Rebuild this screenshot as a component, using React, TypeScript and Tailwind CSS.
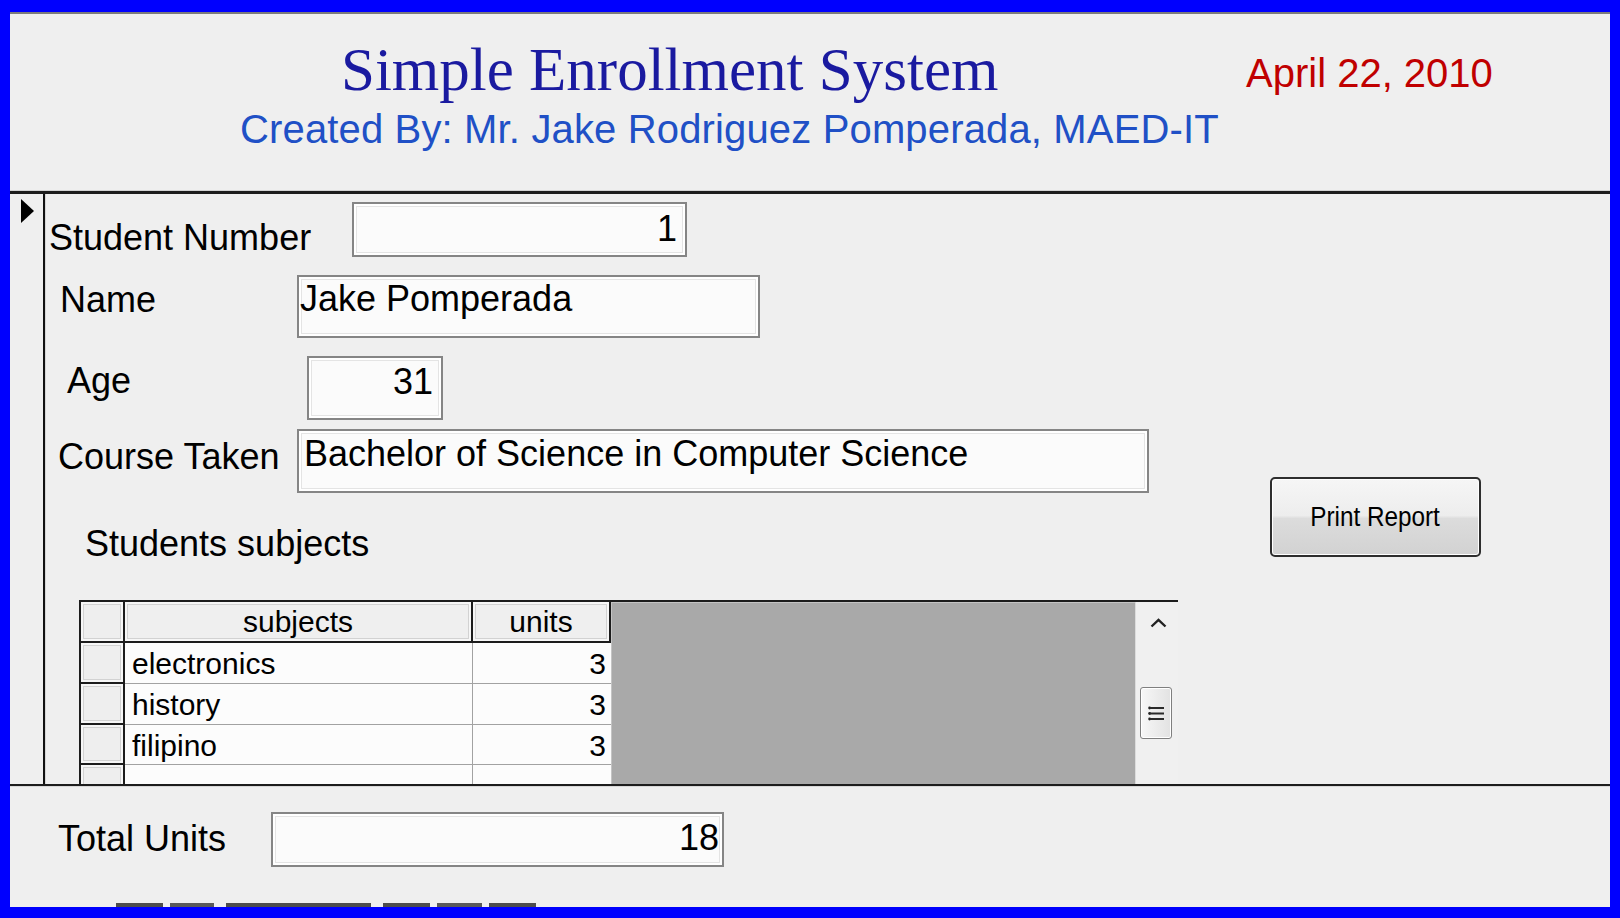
import React from 'react';

const labelCls = "text-[36px] leading-none text-black whitespace-nowrap";

interface BoxProps {
  value: string;
  className: string;
}

// access-style text box, sizes passed in full
const TextBox: React.FC<BoxProps> = ({ value, className }) => (
  <div
    className={`shrink-0 border-2 border-[#858585] bg-[#fbfbfb] text-[36px] leading-none text-black whitespace-nowrap overflow-hidden shadow-[inset_0_0_0_2px_#ffffff,inset_0_0_0_3px_#e4e4e4] ${className}`}
  >
    {value}
  </div>
);

const subjects = [
  { name: 'electronics', units: '3', h: 'h-[41px]' },
  { name: 'history', units: '3', h: 'h-[41px]' },
  { name: 'filipino', units: '3', h: 'h-[40px]' },
  { name: '', units: '', h: 'h-[40px]' },
];

const cellFrame = "shadow-[inset_0_0_0_2px_#f6f6f6,inset_0_0_0_3px_#d2d2d2]";

const Datasheet: React.FC = () => (
  <div className="ml-[33px] mt-[38.5px] flex h-[220px] w-[1099px] border-t-2 border-[#1c1c1c] text-[30px] leading-none text-black">
    <div className="flex w-[532px] shrink-0 flex-col">
      {/* header */}
      <div className="flex h-[41px]">
        <div className={`w-[46px] border-x-2 border-b-2 border-[#1c1c1c] bg-[#eeeeee] ${cellFrame}`} />
        <div className={`w-[348px] border-b-2 border-r-2 border-[#1c1c1c] bg-[#efefef] pt-[5px] text-center ${cellFrame}`}>
          subjects
        </div>
        <div className={`w-[138px] border-b-2 border-r-2 border-[#1c1c1c] bg-[#efefef] pt-[5px] text-center ${cellFrame}`}>
          units
        </div>
      </div>
      {subjects.map((s, i) => (
        <div key={i} className={`flex ${s.h}`}>
          <div className={`w-[46px] border-x-2 border-b-2 border-[#1c1c1c] bg-[#eeeeee] ${cellFrame}`} />
          <div className="w-[348px] border-b border-r border-[#a2a2a2] bg-[#fcfcfc] pl-[7px] pt-[6px]">
            {s.name}
          </div>
          <div className="w-[138px] border-b border-[#a2a2a2] bg-[#fcfcfc] pr-[5px] pt-[6px] text-right">
            {s.units}
          </div>
        </div>
      ))}
    </div>
    <div className="w-[524px] shrink-0 border-l border-t border-[#c4c4c4] bg-[#a9a9a9]" />
    {/* scroll bar */}
    <div className="flex w-[43px] shrink-0 flex-col border-l border-[#dcdcdc] bg-[#f0f0f0] pt-[16px]">
      <svg width="17" height="10" viewBox="0 0 17 10" className="ml-[14px]">
        <path d="M1.5 8.5 L8.5 1.8 L15.5 8.5" fill="none" stroke="#222" strokeWidth="2.4" />
      </svg>
      <div className="ml-[4px] mt-[59px] flex h-[52px] w-[32px] items-center justify-center rounded-[3px] border border-[#7f7f7f] bg-[linear-gradient(to_right,#f7f7f7,#e2e2e2)] shadow-[inset_0_0_0_1px_#ffffff]">
        <svg width="17" height="15" viewBox="0 0 17 15">
          <circle cx="1.6" cy="2" r="1.4" fill="#222" />
          <circle cx="1.6" cy="7.5" r="1.4" fill="#222" />
          <circle cx="1.6" cy="13" r="1.4" fill="#222" />
          <path d="M2 2 H16 M2 7.5 H16 M2 13 H16" stroke="#2a2a2a" strokeWidth="2" />
        </svg>
      </div>
    </div>
  </div>
);

const App: React.FC = () => {
  return (
    <div className="h-[918px] w-[1620px] bg-[#0000fe] pb-[11px] pl-[10px] pr-[10px] pt-[12px] font-['Liberation_Sans',Arial,sans-serif]">
      <div className="flex h-full flex-col bg-[#efefef]">
        {/* form header */}
        <div className="h-[179px] shrink-0 border-t-2 border-b border-t-[#7c7c7c] border-b-[#d2d2d2]">
          <div className="flex items-start">
            <div className="ml-[331px] mt-[25px] w-[905px] shrink-0 whitespace-nowrap font-['Liberation_Serif','Times_New_Roman',serif] text-[61px] leading-none text-[#1a1aa0]">
              Simple Enrollment System
            </div>
            <div className="mt-[39px] whitespace-nowrap text-[40px] leading-none text-[#c00000]">
              April 22, 2010
            </div>
          </div>
          <div className="ml-[230px] mt-[9px] whitespace-nowrap text-[40px] leading-none tracking-[0.15px] text-[#2050c6]">
            Created By: Mr. Jake Rodriguez Pomperada, MAED-IT
          </div>
        </div>
        <div className="h-[3px] shrink-0 bg-[#1c1c1c]" />

        {/* detail */}
        <div className="flex h-[590px] shrink-0 overflow-hidden">
          <div className="w-[35px] shrink-0 border-r-2 border-[#111] pl-[11px] pt-[5px]">
            <div className="h-0 w-0 border-y-[12px] border-l-[13px] border-y-transparent border-l-black" />
          </div>
          <div className="flex flex-1">
            <div className="w-[1131px] shrink-0 border-l border-[#d6d6d6] pt-[8px]">
              <div className="flex items-start">
                <div className={`ml-[3px] mt-[17.5px] w-[303px] shrink-0 ${labelCls}`}>Student Number</div>
                <TextBox value="1" className="h-[55px] w-[335px] pr-[8px] pt-[6.5px] text-right" />
              </div>
              <div className="mt-[18px] flex items-start">
                <div className={`ml-[14px] mt-[6.5px] w-[237px] shrink-0 ${labelCls}`}>Name</div>
                <TextBox value="Jake Pomperada" className="h-[63px] w-[463px] pl-[1px] pt-[3.5px]" />
              </div>
              <div className="mt-[18px] flex items-start">
                <div className={`ml-[21px] mt-[6.5px] w-[240px] shrink-0 ${labelCls}`}>Age</div>
                <TextBox value="31" className="h-[64px] w-[136px] pr-[8px] pt-[5.5px] text-right" />
              </div>
              <div className="mt-[9px] flex items-start">
                <div className={`ml-[12px] mt-[9.5px] w-[239px] shrink-0 ${labelCls}`}>Course Taken</div>
                <TextBox
                  value="Bachelor of Science in Computer Science"
                  className="h-[64px] w-[852px] pl-[5px] pt-[4.5px]"
                />
              </div>
              <div className={`ml-[39px] mt-[32.5px] ${labelCls}`}>Students subjects</div>
              <Datasheet />
            </div>
            <div className="ml-[94px] mt-[283px]">
              <button className="flex h-[80px] w-[211px] items-center justify-center rounded-[5px] border-2 border-[#2e2e2e] bg-[linear-gradient(to_bottom,#f6f6f6_0%,#ededed_48%,#dcdcdc_52%,#d2d2d2_100%)] pt-[1px] text-black shadow-[inset_0_0_0_1px_#ffffff]">
                <span className="inline-block scale-x-[0.9] whitespace-nowrap text-[27px] leading-none">Print Report</span>
              </button>
            </div>
          </div>
        </div>
        <div className="h-[2px] shrink-0 bg-[#1c1c1c]" />

        {/* footer */}
        <div className="h-[121px] shrink-0 overflow-hidden border-t border-[#d8d8d8]">
          <div className="flex items-start">
            <div className={`ml-[48px] mt-[33.5px] w-[213px] shrink-0 ${labelCls}`}>Total Units</div>
            <TextBox value="18" className="mt-[25px] h-[55px] w-[453px] pr-[3px] pt-[5.5px] text-right" />
          </div>
          <div className="ml-[106px] mt-[36px] flex h-[4px]">
            <div className="w-[47px] bg-[#4d4d4d]" />
            <div className="ml-[7px] w-[44px] bg-[#5a5a5a]" />
            <div className="ml-[12px] w-[145px] bg-[#4d4d4d]" />
            <div className="ml-[12px] w-[47px] bg-[#4d4d4d]" />
            <div className="ml-[7px] w-[45px] bg-[#5a5a5a]" />
            <div className="ml-[7px] w-[47px] bg-[#4d4d4d]" />
          </div>
        </div>
      </div>
    </div>
  );
};

export default App;
